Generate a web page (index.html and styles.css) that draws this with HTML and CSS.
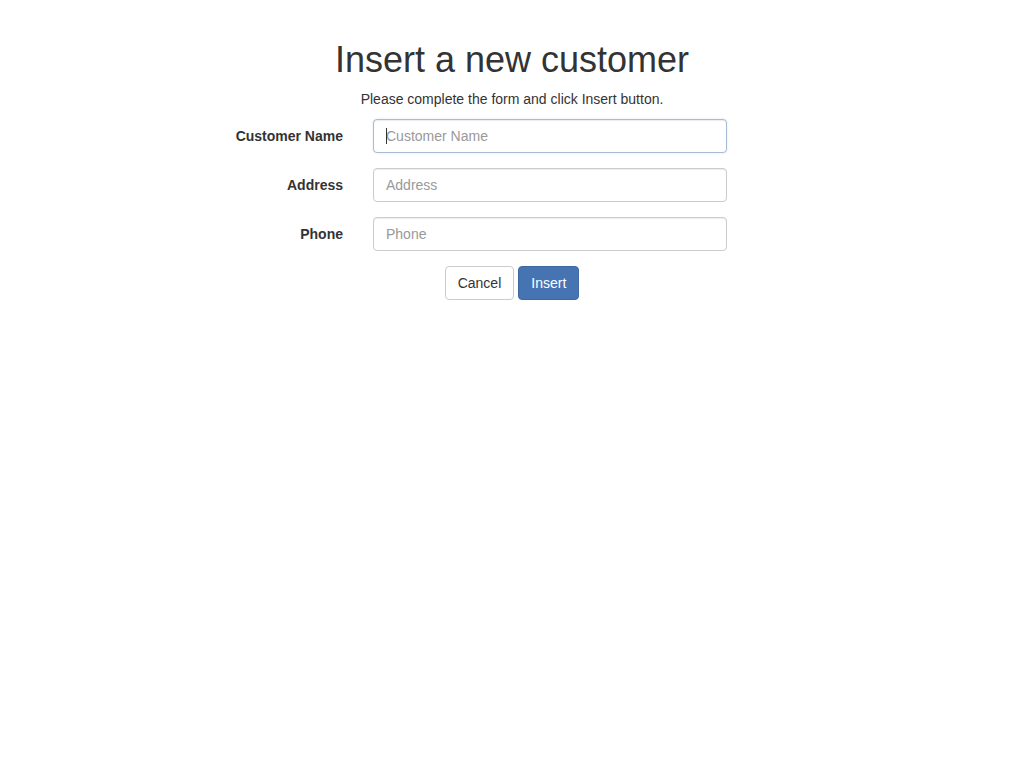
FILE: index.html
```html
<!DOCTYPE html>
<html lang="en">
<head>
<meta charset="utf-8">
<title>Insert a new customer</title>
<link rel="stylesheet" href="styles.css">
</head>
<body>
<div class="page">
  <h1 class="title">Insert a new customer</h1>
  <p class="lead-text">Please complete the form and click Insert button.</p>
  <form class="form">
    <div class="form-row">
      <label class="form-label" for="name">Customer Name</label>
      <div class="field-wrap">
        <input class="form-input is-focused" id="name" type="text" placeholder="Customer Name">
        <span class="caret"></span>
      </div>
    </div>
    <div class="form-row">
      <label class="form-label" for="address">Address</label>
      <div class="field-wrap">
        <input class="form-input" id="address" type="text" placeholder="Address">
      </div>
    </div>
    <div class="form-row">
      <label class="form-label" for="phone">Phone</label>
      <div class="field-wrap">
        <input class="form-input" id="phone" type="text" placeholder="Phone">
      </div>
    </div>
    <div class="actions">
      <button type="button" class="btn btn-default">Cancel</button>
      <button type="button" class="btn btn-primary">Insert</button>
    </div>
  </form>
</div>
</body>
</html>
```
FILE: styles.css
```css
* { box-sizing: border-box; }
html, body { margin: 0; padding: 0; background: #fff; }
body {
  font-family: "Liberation Sans", Arial, sans-serif;
  font-size: 14px;
  line-height: 1.42857;
  color: #333;
}
.page {
  padding-top: 40px;
  text-align: center;
}
.title {
  font-size: 36px;
  font-weight: 500;
  line-height: 1.1;
  margin: 0 0 10px;
  color: #333;
}
.lead-text {
  margin: 0 0 9.4px;
}
.form {
  display: flex;
  flex-direction: column;
  align-items: flex-start;
}
.form-row {
  display: grid;
  grid-template-columns: 343px 354px;
  column-gap: 30px;
  margin-bottom: 15px;
}
.form-label {
  text-align: right;
  font-weight: bold;
  line-height: 20px;
  padding-top: 7px;
}
.field-wrap {
  position: relative;
}
.form-input {
  display: block;
  width: 354px;
  height: 34px;
  padding: 6px 12px;
  font-family: inherit;
  font-size: 14px;
  line-height: 20px;
  color: #555;
  background: #fff;
  border: 1px solid #ccc;
  border-radius: 4px;
  box-shadow: inset 0 1px 1px rgba(0,0,0,.075);
  outline: none;
}
.form-input::placeholder { color: #999; }
.form-input.is-focused {
  border-color: #a9bbd4;
  box-shadow: inset 0 1px 1px rgba(0,0,0,.075), 0 0 2px rgba(102,140,200,.25);
}
.caret {
  position: absolute;
  left: 13px;
  top: 9px;
  width: 1px;
  height: 16px;
  background: #333;
}
.actions {
  width: 100%;
  display: flex;
  justify-content: center;
  gap: 4px;
}
.btn {
  font-family: inherit;
  font-size: 14px;
  line-height: 20px;
  height: 34px;
  padding: 6px 12px;
  border-radius: 4px;
  border: 1px solid transparent;
  cursor: pointer;
}
.btn-default {
  background: #fff;
  color: #333;
  border-color: #ccc;
}
.btn-primary {
  background: #4674b3;
  color: #fff;
  border-color: #3f68a3;
}
```
